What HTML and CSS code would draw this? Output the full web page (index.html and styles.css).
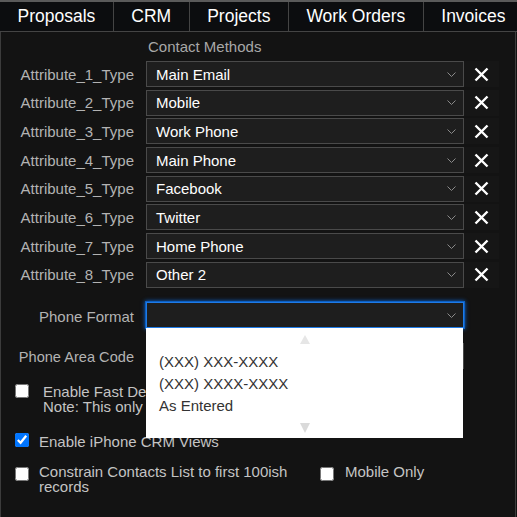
FILE: index.html
```html
<!DOCTYPE html>
<html lang="en">
<head>
<meta charset="utf-8">
<title>CRM Settings</title>
<link rel="stylesheet" href="styles.css">
</head>
<body>
<nav class="tabs">
  <div class="tab">Proposals</div>
  <div class="tab">CRM</div>
  <div class="tab">Projects</div>
  <div class="tab">Work Orders</div>
  <div class="tab">Invoices</div>
</nav>
<main class="panel">
  <div class="title">Contact Methods</div>
  <div class="grid attrs">
    <div class="label">Attribute_1_Type</div>
    <div class="select"><span>Main Email</span><svg class="chev" width="9" height="5" viewBox="0 0 9 5"><polyline points="0.5,0.5 4.5,4.5 8.5,0.5" fill="none" stroke="#8a8a8a" stroke-width="1"/></svg></div>
    <div class="remove"><svg width="15" height="15" viewBox="0 0 15 15"><path d="M1.5 1.5L13.5 13.5M13.5 1.5L1.5 13.5" stroke="#fff" stroke-width="2.4"/></svg></div>

    <div class="label">Attribute_2_Type</div>
    <div class="select"><span>Mobile</span><svg class="chev" width="9" height="5" viewBox="0 0 9 5"><polyline points="0.5,0.5 4.5,4.5 8.5,0.5" fill="none" stroke="#8a8a8a" stroke-width="1"/></svg></div>
    <div class="remove"><svg width="15" height="15" viewBox="0 0 15 15"><path d="M1.5 1.5L13.5 13.5M13.5 1.5L1.5 13.5" stroke="#fff" stroke-width="2.4"/></svg></div>

    <div class="label">Attribute_3_Type</div>
    <div class="select"><span>Work Phone</span><svg class="chev" width="9" height="5" viewBox="0 0 9 5"><polyline points="0.5,0.5 4.5,4.5 8.5,0.5" fill="none" stroke="#8a8a8a" stroke-width="1"/></svg></div>
    <div class="remove"><svg width="15" height="15" viewBox="0 0 15 15"><path d="M1.5 1.5L13.5 13.5M13.5 1.5L1.5 13.5" stroke="#fff" stroke-width="2.4"/></svg></div>

    <div class="label">Attribute_4_Type</div>
    <div class="select"><span>Main Phone</span><svg class="chev" width="9" height="5" viewBox="0 0 9 5"><polyline points="0.5,0.5 4.5,4.5 8.5,0.5" fill="none" stroke="#8a8a8a" stroke-width="1"/></svg></div>
    <div class="remove"><svg width="15" height="15" viewBox="0 0 15 15"><path d="M1.5 1.5L13.5 13.5M13.5 1.5L1.5 13.5" stroke="#fff" stroke-width="2.4"/></svg></div>

    <div class="label">Attribute_5_Type</div>
    <div class="select"><span>Facebook</span><svg class="chev" width="9" height="5" viewBox="0 0 9 5"><polyline points="0.5,0.5 4.5,4.5 8.5,0.5" fill="none" stroke="#8a8a8a" stroke-width="1"/></svg></div>
    <div class="remove"><svg width="15" height="15" viewBox="0 0 15 15"><path d="M1.5 1.5L13.5 13.5M13.5 1.5L1.5 13.5" stroke="#fff" stroke-width="2.4"/></svg></div>

    <div class="label">Attribute_6_Type</div>
    <div class="select"><span>Twitter</span><svg class="chev" width="9" height="5" viewBox="0 0 9 5"><polyline points="0.5,0.5 4.5,4.5 8.5,0.5" fill="none" stroke="#8a8a8a" stroke-width="1"/></svg></div>
    <div class="remove"><svg width="15" height="15" viewBox="0 0 15 15"><path d="M1.5 1.5L13.5 13.5M13.5 1.5L1.5 13.5" stroke="#fff" stroke-width="2.4"/></svg></div>

    <div class="label">Attribute_7_Type</div>
    <div class="select"><span>Home Phone</span><svg class="chev" width="9" height="5" viewBox="0 0 9 5"><polyline points="0.5,0.5 4.5,4.5 8.5,0.5" fill="none" stroke="#8a8a8a" stroke-width="1"/></svg></div>
    <div class="remove"><svg width="15" height="15" viewBox="0 0 15 15"><path d="M1.5 1.5L13.5 13.5M13.5 1.5L1.5 13.5" stroke="#fff" stroke-width="2.4"/></svg></div>

    <div class="label">Attribute_8_Type</div>
    <div class="select"><span>Other 2</span><svg class="chev" width="9" height="5" viewBox="0 0 9 5"><polyline points="0.5,0.5 4.5,4.5 8.5,0.5" fill="none" stroke="#8a8a8a" stroke-width="1"/></svg></div>
    <div class="remove"><svg width="15" height="15" viewBox="0 0 15 15"><path d="M1.5 1.5L13.5 13.5M13.5 1.5L1.5 13.5" stroke="#fff" stroke-width="2.4"/></svg></div>
  </div>

  <div class="grid phone">
    <div class="label lowered">Phone Format</div>
    <div class="select focused">
      <span></span><svg class="chev" width="9" height="5" viewBox="0 0 9 5"><polyline points="0.5,0.5 4.5,4.5 8.5,0.5" fill="none" stroke="#8a8a8a" stroke-width="1"/></svg>
      <div class="dropdown">
        <div class="arrow up"></div>
        <div class="option">(XXX) XXX-XXXX</div>
        <div class="option">(XXX) XXXX-XXXX</div>
        <div class="option">As Entered</div>
        <div class="arrow down"></div>
      </div>
    </div>
    <div></div>

    <div class="label small">Phone Area Code</div>
    <div class="input"></div>
    <div></div>
  </div>

  <div class="checks">
    <div class="check-row fast">
      <input type="checkbox" class="box">
      <div class="check-text nowrap">Enable Fast Deletion of Contacts<br>Note: This only applies to the CRM list</div>
    </div>
    <div class="check-row iphone">
      <input type="checkbox" class="box" checked>
      <div class="check-text">Enable iPhone CRM Views</div>
    </div>
    <div class="check-row constrain">
      <input type="checkbox" class="box">
      <div class="check-text wide">Constrain Contacts List to first 100ish records</div>
      <input type="checkbox" class="box mobile-box">
      <div class="check-text mobile-text">Mobile Only</div>
    </div>
  </div>
</main>
</body>
</html>
```

FILE: styles.css
```css
* {
  box-sizing: border-box;
}

html, body {
  margin: 0;
  padding: 0;
}

body {
  width: 517px;
  height: 517px;
  overflow: hidden;
  background: #131313;
  font-family: "Liberation Sans", Arial, sans-serif;
}

.tabs {
  display: flex;
  height: 32px;
  background: #0c0d0f;
  border-top: 2px solid #5a5a5a;
  border-bottom: 1px solid #444;
  overflow: hidden;
}

.tab {
  flex: none;
  padding: 0 17.5px;
  line-height: 28px;
  font-size: 17.5px;
  color: #fff;
  border-right: 1px solid #444;
  white-space: nowrap;
}

.panel {
  height: 485px;
  margin-right: 1px;
  border-left: 1px solid #3c3c3c;
  border-right: 1px solid #3c3c3c;
  overflow: hidden;
}

.title {
  margin: 6px 0 6px 147px;
  font-size: 15px;
  line-height: 17px;
  color: #a8a8a8;
}

.grid {
  display: grid;
  grid-template-columns: 145px 318px 35px;
  row-gap: 2.7px;
}

.grid.phone {
  margin-top: 14.5px;
  row-gap: 15px;
}

.label {
  align-self: center;
  padding-right: 12px;
  text-align: right;
  font-size: 15px;
  color: #b3b3b3;
  white-space: nowrap;
}

.label.lowered {
  padding-top: 3px;
}

.label.small {
  font-size: 14.6px;
  padding-top: 1px;
}

.select {
  position: relative;
  height: 26px;
  display: flex;
  align-items: center;
  justify-content: space-between;
  padding: 0 7px 0 9px;
  background: #1e1e1e;
  border: 1px solid #4a4a4a;
  color: #fff;
  font-size: 15px;
}

.select.focused {
  border-color: #1f7be6;
  box-shadow: 0 0 0 1px #0b5fc4, 0 0 4px 1px #0a66d6;
}

.chev {
  display: block;
  flex: none;
}

.remove {
  display: flex;
  align-items: center;
  justify-content: center;
  background: #161616;
}

.input {
  height: 26px;
  background: #1e1e1e;
  border: 1px solid #4a4a4a;
}

.dropdown {
  position: absolute;
  z-index: 5;
  left: -1px;
  top: 25px;
  width: 317px;
  padding: 7px 0 5px;
  background: #fff;
}

.arrow {
  width: 0;
  height: 0;
  margin: 0 auto;
  border-left: 5px solid transparent;
  border-right: 5px solid transparent;
}

.arrow.up {
  border-bottom: 9px solid #e6e6e6;
  margin-bottom: 7px;
}

.arrow.down {
  border-top: 10px solid #dadada;
  margin-top: 6px;
}

.option {
  padding-left: 13px;
  font-size: 15px;
  line-height: 22px;
  color: #333;
}

.checks {
  padding-left: 14px;
}

.check-row {
  display: flex;
  align-items: flex-start;
}

.box {
  flex: none;
  width: 14px;
  height: 14px;
  margin: 0;
}

.check-text {
  font-size: 15px;
  line-height: 14.5px;
  color: #c4c4c4;
}

.nowrap {
  white-space: nowrap;
}

.fast {
  margin-top: 15px;
}

.fast .check-text {
  margin: 1px 0 0 14px;
}

.iphone {
  margin-top: 19px;
}

.iphone .check-text {
  margin: 1.5px 0 0 10px;
}

.constrain {
  margin-top: 16px;
}

.constrain .box {
  margin-top: 2px;
}

.check-text.wide {
  width: 265px;
  margin-left: 10px;
}

.box.mobile-box {
  margin-left: 16px;
}

.check-text.mobile-text {
  margin-left: 11px;
}
```
